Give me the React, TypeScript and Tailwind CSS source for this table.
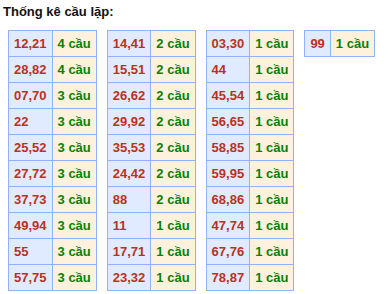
const tables: [string, number][][] = [
  [
    ["12,21", 4],
    ["28,82", 4],
    ["07,70", 3],
    ["22", 3],
    ["25,52", 3],
    ["27,72", 3],
    ["37,73", 3],
    ["49,94", 3],
    ["55", 3],
    ["57,75", 3],
  ],
  [
    ["14,41", 2],
    ["15,51", 2],
    ["26,62", 2],
    ["29,92", 2],
    ["35,53", 2],
    ["24,42", 2],
    ["88", 2],
    ["11", 1],
    ["17,71", 1],
    ["23,32", 1],
  ],
  [
    ["03,30", 1],
    ["44", 1],
    ["45,54", 1],
    ["56,65", 1],
    ["58,85", 1],
    ["59,95", 1],
    ["68,86", 1],
    ["47,74", 1],
    ["67,76", 1],
    ["78,87", 1],
  ],
  [["99", 1]],
];

function StatTable({ rows }: { rows: [string, number][] }) {
  return (
    <table className="border-collapse border border-[#8fb2fa] self-start">
      <tbody>
        {rows.map(([pair, n]) => (
          <tr key={pair}>
            <td className="border border-[#8fb2fa] bg-[#e0ebff] px-[5px] py-[5px] leading-[15px] text-left text-[#b8321f]">
              {pair}
            </td>
            <td className="border border-[#8fb2fa] bg-[#fff2dd] px-[5px] py-[5px] leading-[15px] text-left text-[#078007]">
              {n} cầu
            </td>
          </tr>
        ))}
      </tbody>
    </table>
  );
}

export default function App() {
  return (
    <div className="w-[392px] h-[294px] bg-white pt-[4px] pl-[3px] font-['Liberation_Sans',Arial,sans-serif] text-[13px] font-bold overflow-hidden">
      <h3 className="leading-[15px] text-[13px] font-bold text-[#111]">Thống kê cầu lặp:</h3>
      <div className="flex items-start mt-[11px] gap-[10px] pl-[5px]">
        {tables.map((rows, i) => (
          <StatTable key={i} rows={rows} />
        ))}
      </div>
    </div>
  );
}
